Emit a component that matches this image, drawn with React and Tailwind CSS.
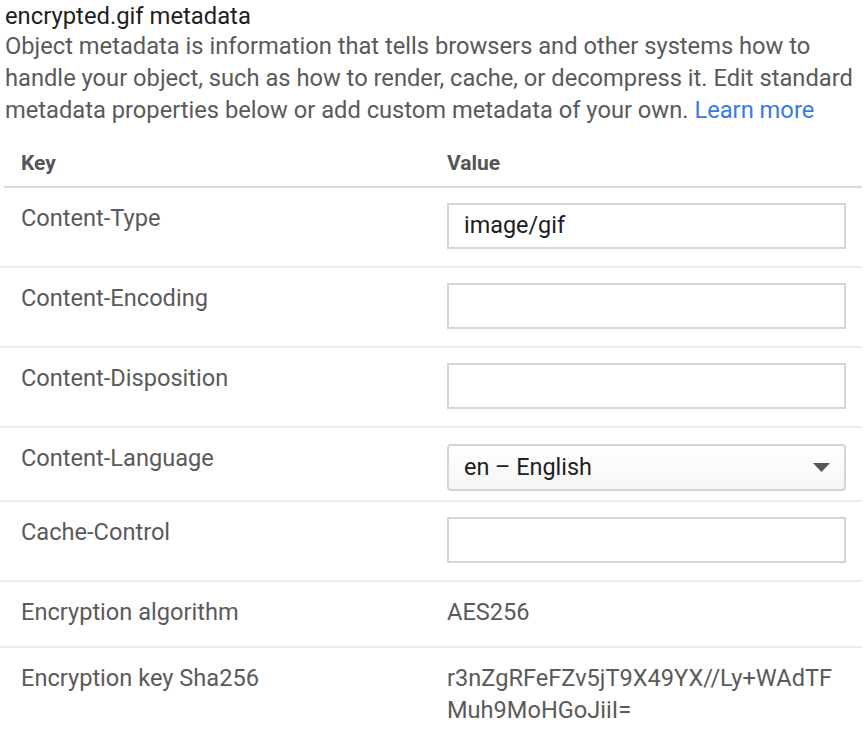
import React from "react";

const font = { fontFamily: "Roboto, 'Noto Sans', Arial, sans-serif" };

function KeyCell({ children }) {
  return <div className="w-[447px] pl-[21px] pt-[14px] text-[23.6px] leading-[32px] text-[#5a5a5a]">{children}</div>;
}

function InputRow({ label, value }) {
  return (
    <div className="flex h-[80px] border-b-2 border-[#ececec]">
      <KeyCell>{label}</KeyCell>
      <div className="pt-[15px]">
        <div className="flex h-[46px] w-[399px] items-center border-2 border-[#d5d5d5] px-[15px] text-[23.4px] text-[#202020]">
          {value}
        </div>
      </div>
    </div>
  );
}

export default function App() {
  return (
    <div className="w-[868px] bg-white" style={font}>
      <div className="pl-[5px] pt-[3px] text-[23.8px] leading-[27px] text-[#1e1e1e]">encrypted.gif metadata</div>
      <div className="pl-[5px] text-[23.7px] leading-[32px] text-[#5a5a5a]">
        Object metadata is information that tells browsers and other systems how to handle your object, such as how to render, cache, or decompress it. Edit standard metadata properties below or add custom metadata of your own.{" "}
        <span className="text-[#3b78e7]">Learn more</span>
      </div>
      <div className="mt-[15px] mr-[6px] ml-[4px]">
        <div className="flex h-[47px] border-b-2 border-[#dadada] text-[21px] font-bold leading-[32px] text-[#555]">
          <div className="w-[443px] pl-[17px] pt-[6px]">Key</div>
          <div className="pt-[6px]">Value</div>
        </div>
        <div className="-ml-[4px]">
          <InputRow label="Content-Type" value="image/gif" />
          <InputRow label="Content-Encoding" value="" />
          <InputRow label="Content-Disposition" value="" />
          <div className="flex h-[74px] border-b-2 border-[#ececec]">
            <KeyCell>Content-Language</KeyCell>
            <div className="pt-[16px]">
              <div className="flex h-[47px] w-[399px] items-center justify-between rounded-[4px] border-2 border-[#d5d5d5] bg-gradient-to-b from-[#ffffff] to-[#f6f6f6] pl-[15px] pr-[14px] text-[23.4px] text-[#202020]">
                <span>en – English</span>
                <svg width="17" height="9" viewBox="0 0 17 9"><path d="M0 0 L17 0 L8.5 9 Z" fill="#555" /></svg>
              </div>
            </div>
          </div>
          <InputRow label="Cache-Control" value="" />
          <div className="flex h-[66px] border-b-2 border-[#ececec]">
            <KeyCell>Encryption algorithm</KeyCell>
            <div className="pt-[14px] text-[23.6px] leading-[32px] text-[#5a5a5a]">AES256</div>
          </div>
          <div className="flex h-[92px]">
            <KeyCell>Encryption key Sha256</KeyCell>
            <div className="w-[415px] pt-[14px] text-[23.6px] leading-[32px] text-[#5a5a5a]">
              <div className="whitespace-nowrap">r3nZgRFeFZv5jT9X49YX//Ly+WAdTF</div>
              <div>Muh9MoHGoJiiI=</div>
            </div>
          </div>
        </div>
      </div>
    </div>
  );
}
